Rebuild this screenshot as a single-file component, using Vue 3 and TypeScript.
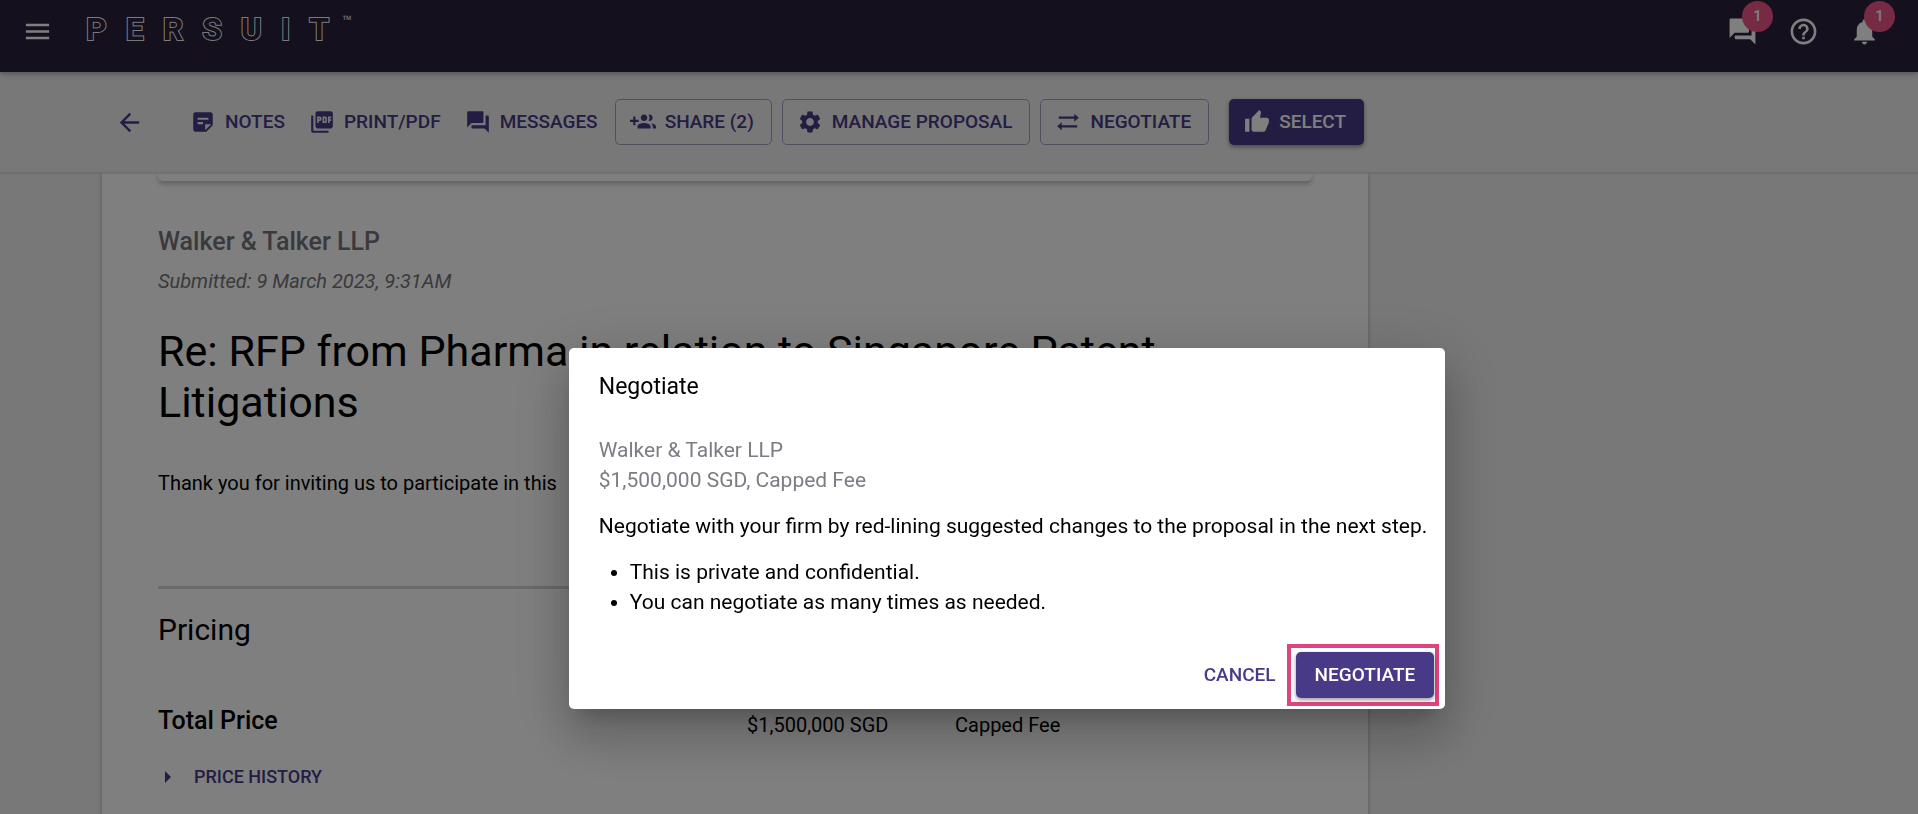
<script setup lang="ts">
import { ref } from 'vue'

interface ToolbarAction {
  label: string
  icon: string
  variant: 'plain' | 'outlined' | 'filled'
}

const icons: Record<string, string> = {
  menu: 'M3 18h18v-2H3v2zm0-5h18v-2H3v2zm0-7v2h18V6H3z',
  back: 'M20 11H7.83l5.59-5.59L12 4l-8 8 8 8 1.41-1.41L7.83 13H20v-2z',
  forum:
    'M21 6h-2v9H6v2c0 .55.45 1 1 1h11l4 4V7c0-.55-.45-1-1-1zm-4 6V3c0-.55-.45-1-1-1H3c-.55 0-1 .45-1 1v14l4-4h10c.55 0 1-.45 1-1z',
  help: 'M11 18h2v-2h-2v2zm1-16C6.48 2 2 6.48 2 12s4.48 10 10 10 10-4.48 10-10S17.52 2 12 2zm0 18c-4.41 0-8-3.59-8-8s3.59-8 8-8 8 3.59 8 8-3.59 8-8 8zm0-14c-2.21 0-4 1.79-4 4h2c0-1.1.9-2 2-2s2 .9 2 2c0 2-3 1.75-3 5h2c0-2.25 3-2.5 3-5 0-2.21-1.79-4-4-4z',
  bell: 'M12 22c1.1 0 2-.9 2-2h-4c0 1.1.89 2 2 2zm6-6v-5c0-3.07-1.64-5.64-4.5-6.32V4c0-.83-.67-1.5-1.5-1.5s-1.5.67-1.5 1.5v.68C7.63 5.36 6 7.92 6 11v5l-2 2v1h16v-1l-2-2z',
  note: 'M19 3H4.99C3.89 3 3 3.9 3 5l.01 14c0 1.1.89 2 1.99 2h10l6-6V5c0-1.1-.9-2-2-2zM7 8h10v2H7V8zm5 6H7v-2h5v2zm2 5.5V14h5.5L14 19.5z',
  pdf: 'M20 2H8c-1.1 0-2 .9-2 2v12c0 1.1.9 2 2 2h12c1.1 0 2-.9 2-2V4c0-1.1-.9-2-2-2zm-8.5 7.5c0 .83-.67 1.5-1.5 1.5H9v2H7.5V7H10c.83 0 1.5.67 1.5 1.5v1zm5 2c0 .83-.67 1.5-1.5 1.5h-2.5V7H15c.83 0 1.5.67 1.5 1.5v3zm4-3H19v1h1.5V11H19v2h-1.5V7h3v1.5zM9 9.5h1v-1H9v1zM4 6H2v14c0 1.1.9 2 2 2h14v-2H4V6zm10 5.5h1v-3h-1v3z',
  share:
    'M8 10H5V7H3v3H0v2h3v3h2v-3h3v-2zm10 1c1.66 0 2.99-1.34 2.99-3S19.66 5 18 5c-.32 0-.63.05-.91.14.57.81.9 1.79.9 2.86s-.34 2.04-.9 2.86c.28.09.59.14.91.14zm-5 0c1.66 0 2.99-1.34 2.99-3S14.66 5 13 5c-1.66 0-3 1.34-3 3s1.34 3 3 3zm6.62 2.16c.83.73 1.38 1.66 1.38 2.84v2h3v-2c0-1.54-2.37-2.49-4.38-2.84zM13 13c-2 0-6 1-6 3v2h12v-2c0-2-4-3-6-3z',
  settings:
    'M19.14 12.94c.04-.3.06-.61.06-.94 0-.32-.02-.64-.07-.94l2.03-1.58c.18-.14.23-.41.12-.61l-1.92-3.32c-.12-.22-.37-.29-.59-.22l-2.39.96c-.5-.38-1.03-.7-1.62-.94l-.36-2.54c-.04-.24-.24-.41-.48-.41h-3.84c-.24 0-.43.17-.47.41l-.36 2.54c-.59.24-1.13.57-1.62.94l-2.39-.96c-.22-.08-.47 0-.59.22L2.74 8.87c-.12.21-.08.47.12.61l2.03 1.58c-.05.3-.09.63-.09.94s.02.64.07.94l-2.03 1.58c-.18.14-.23.41-.12.61l1.92 3.32c.12.22.37.29.59.22l2.39-.96c.5.38 1.03.7 1.62.94l.36 2.54c.05.24.24.41.48.41h3.84c.24 0 .44-.17.47-.41l.36-2.54c.59-.24 1.13-.56 1.62-.94l2.39.96c.22.08.47 0 .59-.22l1.92-3.32c.12-.22.07-.47-.12-.61l-2.01-1.58zM12 15.6c-1.98 0-3.6-1.62-3.6-3.6s1.62-3.6 3.6-3.6 3.6 1.62 3.6 3.6-1.62 3.6-3.6 3.6z',
  swap: 'M3.5 7h14.3V4.3L22 8l-4.2 3.7V9H3.5zM20.5 15H6.2v-2.7L2 16l4.2 3.7V17h14.3z',
  thumb:
    'M1 21h4V9H1v12zm22-11c0-1.1-.9-2-2-2h-6.31l.95-4.57.03-.32c0-.41-.17-.79-.44-1.06L14.17 1 7.59 7.59C7.22 7.95 7 8.45 7 9v10c0 1.1.9 2 2 2h9c.83 0 1.54-.5 1.84-1.22l3.02-7.05c.09-.23.14-.47.14-.73v-2z',
  expand: 'M7 6v12l6-6z'
}

const actions: ToolbarAction[] = [
  { label: 'Notes', icon: 'note', variant: 'plain' },
  { label: 'Print/PDF', icon: 'pdf', variant: 'plain' },
  { label: 'Messages', icon: 'forum', variant: 'plain' },
  { label: 'Share (2)', icon: 'share', variant: 'outlined' },
  { label: 'Manage proposal', icon: 'settings', variant: 'outlined' },
  { label: 'Negotiate', icon: 'swap', variant: 'outlined' },
  { label: 'Select', icon: 'thumb', variant: 'filled' }
]

const alerts = [
  { name: 'Messages', icon: 'forum', count: 1 },
  { name: 'Help', icon: 'help', count: 0 },
  { name: 'Notifications', icon: 'bell', count: 1 }
]

const brand = 'PERSUIT'.split('')
const notes = ['This is private and confidential.', 'You can negotiate as many times as needed.']
const dialogOpen = ref(true)
</script>

<template>
  <div class="page">
    <header class="topbar">
      <button class="icon-button" type="button" aria-label="Menu">
        <svg class="icon icon-large" viewBox="0 0 24 24"><path :d="icons.menu" /></svg>
      </button>
      <a class="brand" href="#" aria-label="PERSUIT">
        <span v-for="(letter, i) in brand" :key="i" class="brand-letter">{{ letter }}</span>
        <span class="brand-mark">™</span>
      </a>
      <nav class="alerts">
        <button v-for="a in alerts" :key="a.name" class="icon-button" type="button" :aria-label="a.name">
          <svg class="icon icon-large" viewBox="0 0 24 24"><path :d="icons[a.icon]" /></svg>
          <span v-if="a.count" class="badge">{{ a.count }}</span>
        </button>
      </nav>
    </header>

    <div class="toolbar">
      <button class="icon-button back" type="button" aria-label="Back">
        <svg class="icon icon-back" viewBox="0 0 24 24"><path :d="icons.back" /></svg>
      </button>
      <button v-for="a in actions" :key="a.label" type="button" class="button" :class="a.variant">
        <svg class="icon" viewBox="0 0 24 24"><path :d="icons[a.icon]" /></svg>
        {{ a.label }}
      </button>
    </div>

    <main class="sheet">
      <div class="previous-card"></div>
      <h2 class="firm">Walker &amp; Talker LLP</h2>
      <p class="submitted">Submitted: 9 March 2023, 9:31AM</p>
      <h1 class="title">Re: RFP from Pharma in relation to Singapore Patent Litigations</h1>
      <p class="intro">Thank you for inviting us to participate in this</p>
      <hr class="divider" />
      <h2 class="section">Pricing</h2>
      <div class="price-row">
        <h3 class="total">Total Price</h3>
        <span>$1,500,000 SGD</span>
        <span>Capped Fee</span>
      </div>
      <button type="button" class="history">
        <svg class="icon history-icon" viewBox="0 0 24 24"><path :d="icons.expand" /></svg>
        Price history
      </button>
    </main>

    <div v-if="dialogOpen" class="backdrop">
      <section class="dialog" role="dialog" aria-modal="true" aria-labelledby="dialog-title">
        <h2 id="dialog-title" class="dialog-title">Negotiate</h2>
        <p class="dialog-muted">Walker &amp; Talker LLP<br />$1,500,000 SGD, Capped Fee</p>
        <p class="dialog-text">
          Negotiate with your firm by red-lining suggested changes to the proposal in the next step.
        </p>
        <ul class="dialog-list">
          <li v-for="n in notes" :key="n">{{ n }}</li>
        </ul>
        <div class="dialog-actions">
          <button type="button" class="button cancel" @click="dialogOpen = false">Cancel</button>
          <div class="highlight">
            <button type="button" class="button filled confirm">Negotiate</button>
          </div>
        </div>
      </section>
    </div>
  </div>
</template>

<style>
body {
  margin: 0;
  background: #f0f0f0;
}
</style>

<style scoped>
.page {
  --purple: #483a87;
  --bar: #28213a;
  display: flex;
  flex-direction: column;
  height: 100vh;
  overflow: hidden;
  background: #f0f0f0;
  color: #000;
  font: 400 20px/30px Roboto, 'Liberation Sans', sans-serif;
}
.page * {
  box-sizing: border-box;
}
h1, h2, h3, p, ul {
  margin: 0;
  font-weight: 400;
}
button {
  border: 0;
  padding: 0;
  background: none;
  color: inherit;
  font: inherit;
  cursor: pointer;
}
.icon {
  display: block;
  flex: none;
  width: 26px;
  height: 26px;
  fill: currentColor;
}
.icon-large {
  width: 31px;
  height: 31px;
}
.icon-back {
  width: 29px;
  height: 29px;
}
.icon-button {
  position: relative;
  display: flex;
}

.topbar {
  position: relative;
  z-index: 2;
  display: flex;
  flex: none;
  align-items: center;
  height: 72px;
  padding: 0 38px 10px 22px;
  background: var(--bar);
  color: #fff;
  box-shadow: 0 2px 5px rgba(0, 0, 0, 0.3);
}
.brand {
  display: flex;
  gap: 19px;
  margin-left: 33px;
  padding-bottom: 4px;
  color: var(--bar);
  font-size: 32px;
  font-weight: 700;
  line-height: 30px;
  text-decoration: none;
}
.brand-letter {
  -webkit-text-stroke: 2px #f4f4f6;
  paint-order: stroke fill;
}
.brand-mark {
  margin-left: -6px;
  color: #e0e0e4;
  font-size: 16px;
  font-weight: 400;
  line-height: 16px;
}
.alerts {
  display: flex;
  gap: 30px;
  margin-left: auto;
}
.badge {
  position: absolute;
  top: -15px;
  left: 15px;
  width: 31px;
  height: 31px;
  border-radius: 50%;
  background: #ee5487;
  font-size: 15px;
  font-weight: 500;
  line-height: 31px;
  text-align: center;
}

.toolbar {
  position: relative;
  z-index: 1;
  display: flex;
  flex: none;
  align-items: center;
  gap: 10px;
  height: 101px;
  padding: 0 20px 0 115px;
  border-bottom: 1px solid #e0e0e0;
  background: #f0f0f0;
  color: var(--purple);
  box-shadow: 0 1px 1px rgba(0, 0, 0, 0.08);
}
.back {
  margin-right: 29px;
}
.button {
  display: flex;
  align-items: center;
  gap: 9px;
  height: 46px;
  padding: 0 7px;
  border-radius: 5px;
  color: var(--purple);
  font-size: 19px;
  font-weight: 500;
  text-transform: uppercase;
  white-space: nowrap;
}
.outlined {
  padding: 0 17px 0 14px;
  border: 1px solid #a49dc3;
}
.filled {
  padding: 0 18px 0 15px;
  background: var(--purple);
  color: #fff;
  box-shadow: 0 2px 4px rgba(0, 0, 0, 0.4);
}
.toolbar .filled {
  margin-left: 10px;
}

.sheet {
  width: 66%;
  min-height: 700px;
  margin-left: 102px;
  padding: 0 56px;
  background: #fff;
  box-shadow: 0 1px 4px rgba(0, 0, 0, 0.3);
}
.previous-card {
  height: 8px;
  border-radius: 0 0 5px 5px;
  box-shadow: 0 3px 5px rgba(0, 0, 0, 0.25);
}
.firm {
  margin-top: 46px;
  color: #75747b;
  font-size: 25px;
  font-weight: 500;
}
.submitted {
  margin-top: 9px;
  color: #75747b;
  font-style: italic;
}
.title {
  margin-top: 30px;
  font-size: 43px;
  line-height: 51px;
}
.intro {
  margin-top: 40px;
}
.divider {
  height: 3px;
  margin: 88px 0 0;
  border: 0;
  background: #d4d4d4;
}
.section {
  margin-top: 26px;
  font-size: 30px;
}
.price-row {
  display: grid;
  grid-template-columns: 589px 208px 1fr;
  align-items: end;
  margin-top: 61px;
}
.total {
  padding-bottom: 4px;
  font-size: 25px;
  font-weight: 500;
}
.history {
  display: flex;
  align-items: center;
  gap: 12px;
  margin-top: 22px;
  color: var(--purple);
  font-size: 18px;
  font-weight: 500;
  text-transform: uppercase;
}
.history-icon {
  width: 24px;
  height: 24px;
}

.backdrop {
  position: fixed;
  inset: 0;
  z-index: 10;
  display: flex;
  align-items: center;
  justify-content: center;
  padding: 243px 0 0 96px;
  background: rgba(0, 0, 0, 0.5);
}
.dialog {
  padding: 24px 6px 3px 30px;
  border-radius: 5px;
  background: #fff;
  font-size: 21px;
  box-shadow:
    0 14px 19px -9px rgba(0, 0, 0, 0.2),
    0 30px 48px 4px rgba(0, 0, 0, 0.14),
    0 11px 58px 10px rgba(0, 0, 0, 0.12);
}
.dialog-title {
  font-size: 23px;
}
.dialog-muted {
  margin-top: 33px;
  color: #7d7c84;
}
.dialog-text {
  margin: 16px 12px 0 0;
}
.dialog-list {
  margin-top: 16px;
  padding-left: 31px;
}
.dialog-actions {
  display: flex;
  align-items: center;
  justify-content: flex-end;
  gap: 4px;
  margin-top: 27px;
}
.highlight {
  padding: 4px 1px 4px 5px;
  border: 4px solid #de457f;
}
.confirm {
  padding: 0 19px;
}
</style>
